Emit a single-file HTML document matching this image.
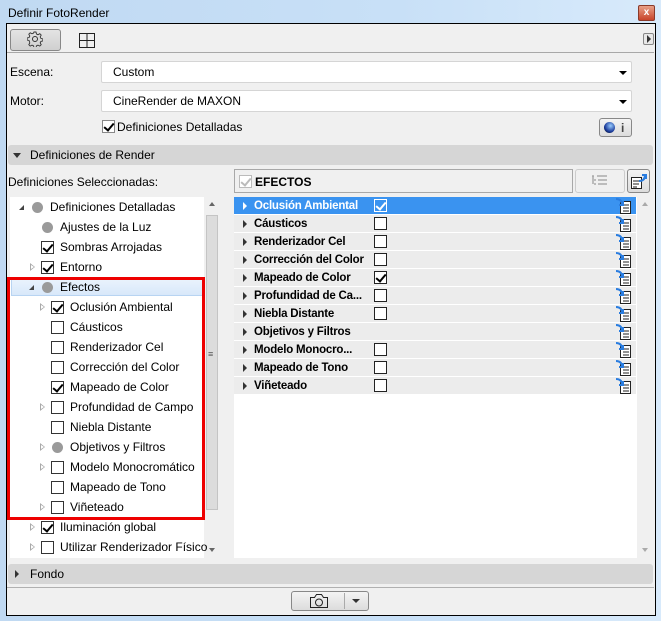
<!DOCTYPE html>
<html><head><meta charset="utf-8"><style>
*{box-sizing:border-box;margin:0;padding:0}
body{width:661px;height:621px;overflow:hidden;background:linear-gradient(90deg,#c0d9f2,#c8e0f7 60%,#d8eafb);font-family:"Liberation Sans",sans-serif;font-size:12px;color:#000;position:relative}
.a{position:absolute}
.t{position:absolute;white-space:nowrap;line-height:14px}
.cb{position:absolute;width:13px;height:13px;border:1px solid #333;background:#fff}
.ck::after{content:"";position:absolute;left:3px;top:0px;width:4px;height:8px;border:solid #000;border-width:0 2px 2px 0;transform:rotate(40deg)}
.lg::after{border-color:#bbb}
.dot{position:absolute;width:11px;height:11px;border-radius:50%;background:#9a9a9a}
.ot{position:absolute;width:0;height:0;border-left:5px solid #aaa;border-top:4px solid transparent;border-bottom:4px solid transparent}
.ot::after{content:"";position:absolute;left:-4px;top:-2px;border-left:3px solid #fff;border-top:2px solid transparent;border-bottom:2px solid transparent}
.dt{position:absolute;width:0;height:0;border-left:5px solid transparent;border-bottom:5px solid #444}
.rt{position:absolute;width:0;height:0;border-left:4px solid #333;border-top:4px solid transparent;border-bottom:4px solid transparent}
.rb{font-weight:bold;font-size:11.5px;letter-spacing:-0.2px}
.combo{position:absolute;background:#fff;border:1px solid #d5d5d5;border-radius:2px}
.combo::after{content:"";position:absolute;right:4px;top:9px;border-top:4px solid #000;border-left:4px solid transparent;border-right:4px solid transparent}
</style></head><body>
<div class="t" style="left:8px;top:6px;font-size:12px">Definir FotoRender</div>
<div class="a" style="left:638px;top:5px;width:17px;height:16px;background:linear-gradient(#e8a088,#c8442a);border:1px solid #8a3a2a;border-radius:2px;color:#fff;font-size:10px;font-weight:bold;text-align:center;line-height:13px">x</div>
<div class="a" style="left:6px;top:23px;width:650px;height:593px;border:1px solid #000;background:#f0f0f0"></div>
<div class="a" style="left:10px;top:29px;width:51px;height:22px;border:1px solid #888;border-radius:3px;background:linear-gradient(#e4e4e4,#d0d0d0)"></div>
<svg class="a" style="left:27px;top:31px" width="16" height="16" viewBox="0 0 16 16"><circle cx="8" cy="8" r="2.5" fill="none" stroke="#333"/><path d="M7 1h2l.5 2 1.5.7 1.8-1 1.4 1.4-1 1.8.7 1.5 2 .5v2l-2 .5-.7 1.5 1 1.8-1.4 1.4-1.8-1-1.5.7-.5 2H7l-.5-2-1.5-.7-1.8 1-1.4-1.4 1-1.8L2.1 9.5.1 9V7l2-.5.7-1.5-1-1.8L3.2 1.8l1.8 1 1.5-.7z" fill="none" stroke="#333" stroke-width=".9"/></svg>
<svg class="a" style="left:79px;top:33px" width="16" height="15"><rect x=".5" y=".5" width="15" height="14" fill="none" stroke="#222"/><path d="M8 1v13M1 7.5h14" stroke="#222"/></svg>
<div class="a" style="left:643px;top:33px;width:11px;height:12px;border:1px solid #888;border-radius:2px;background:#e8e8e8"></div>
<div class="rt" style="left:647px;top:35px"></div>
<div class="a" style="left:7px;top:52px;width:647px;height:1px;background:#a8a8a8"></div>
<div class="t" style="left:10px;top:65px">Escena:</div>
<div class="combo" style="left:101px;top:61px;width:531px;height:22px"></div>
<div class="t" style="left:113px;top:65px">Custom</div>
<div class="t" style="left:10px;top:94px">Motor:</div>
<div class="combo" style="left:101px;top:90px;width:531px;height:22px"></div>
<div class="t" style="left:113px;top:94px">CineRender de MAXON</div>
<div class="cb ck" style="left:102px;top:120px;border-color:#888"></div>
<div class="t" style="left:117px;top:120px">Definiciones Detalladas</div>
<div class="a" style="left:599px;top:118px;width:33px;height:19px;border:1px solid #888;border-radius:3px;background:linear-gradient(#f4f4f4,#dcdcdc)"></div>
<div class="a" style="left:604px;top:122px;width:11px;height:11px;border-radius:50%;background:radial-gradient(circle at 60% 35%,#9cf,#1a3a9a 60%,#000)"></div>
<div class="t" style="left:621px;top:121px;font-weight:bold;color:#444">i</div>
<div class="a" style="left:8px;top:145px;width:645px;height:20px;background:#d6d6d6;border-radius:3px"></div>
<div class="a" style="left:13px;top:153px;border-top:5px solid #333;border-left:4px solid transparent;border-right:4px solid transparent"></div>
<div class="t" style="left:30px;top:148px">Definiciones de Render</div>
<div class="t" style="left:8px;top:175px">Definiciones Seleccionadas:</div>
<div class="a" style="left:234px;top:169px;width:339px;height:24px;border:1px solid #a8a8a8;background:#f0f0f0"></div>
<div class="cb ck lg" style="left:239px;top:175px;border-color:#bbb"></div>
<div class="t" style="left:255px;top:175px;font-weight:bold">EFECTOS</div>
<div class="a" style="left:575px;top:169px;width:50px;height:24px;border:1px solid #ccc;border-radius:3px;background:#f0f0f0"></div>
<svg class="a" style="left:591px;top:175px" width="18" height="12"><path d="M1 1h2M6 1h10M3 5h2M7 5h9M3 9h2M7 9h9M2 1v8" stroke="#aaa" stroke-width="1.5"/></svg>
<div class="a" style="left:627px;top:169px;width:23px;height:24px;border:1px solid #888;border-radius:3px;background:linear-gradient(#f4f4f4,#dcdcdc)"></div>
<svg class="a" style="left:630px;top:172px" width="18" height="18"><rect x="1.5" y="5.5" width="10" height="11" fill="#fff" stroke="#222"/><path d="M3 9h6M3 12h6M3 15h4" stroke="#222"/><path d="M9 9c4 0 6-2 6-6M12 3h4v4" fill="none" stroke="#2a7de0" stroke-width="2"/></svg>
<div class="a" style="left:10px;top:197px;width:194px;height:361px;background:#fff"></div>
<div class="a" style="left:204px;top:197px;width:16px;height:361px;background:#f0f0f0"></div>
<div class="a" style="left:206px;top:215px;width:12px;height:295px;background:#dcdcdc;border:1px solid #c4c4c4"></div>
<div class="t" style="left:208px;top:347px;color:#555;font-size:9px">≡</div>
<div class="a" style="left:209px;top:202px;border-bottom:4px solid #666;border-left:3px solid transparent;border-right:3px solid transparent"></div>
<div class="a" style="left:209px;top:548px;border-top:4px solid #666;border-left:3px solid transparent;border-right:3px solid transparent"></div>
<div class="a" style="left:11px;top:278px;width:192px;height:18px;background:linear-gradient(#eaf3fd,#d8e8fa);border:1px solid #b8d4f2"></div>
<div class="dt" style="left:19px;top:205px"></div><div class="dot" style="left:32px;top:202px"></div><div class="t" style="left:50px;top:200px">Definiciones Detalladas</div>
<div class="dot" style="left:42px;top:222px"></div><div class="t" style="left:60px;top:220px">Ajustes de la Luz</div>
<div class="cb ck" style="left:41px;top:241px"></div><div class="t" style="left:60px;top:240px">Sombras Arrojadas</div>
<div class="ot" style="left:30px;top:263px"></div><div class="cb ck" style="left:41px;top:261px"></div><div class="t" style="left:60px;top:260px">Entorno</div>
<div class="dt" style="left:29px;top:285px"></div><div class="dot" style="left:42px;top:282px"></div><div class="t" style="left:60px;top:280px">Efectos</div>
<div class="ot" style="left:40px;top:303px"></div><div class="cb ck" style="left:51px;top:301px"></div><div class="t" style="left:70px;top:300px">Oclusión Ambiental</div>
<div class="cb" style="left:51px;top:321px"></div><div class="t" style="left:70px;top:320px">Cáusticos</div>
<div class="cb" style="left:51px;top:341px"></div><div class="t" style="left:70px;top:340px">Renderizador Cel</div>
<div class="cb" style="left:51px;top:361px"></div><div class="t" style="left:70px;top:360px">Corrección del Color</div>
<div class="cb ck" style="left:51px;top:381px"></div><div class="t" style="left:70px;top:380px">Mapeado de Color</div>
<div class="ot" style="left:40px;top:403px"></div><div class="cb" style="left:51px;top:401px"></div><div class="t" style="left:70px;top:400px">Profundidad de Campo</div>
<div class="cb" style="left:51px;top:421px"></div><div class="t" style="left:70px;top:420px">Niebla Distante</div>
<div class="ot" style="left:40px;top:443px"></div><div class="dot" style="left:52px;top:442px"></div><div class="t" style="left:70px;top:440px">Objetivos y Filtros</div>
<div class="ot" style="left:40px;top:463px"></div><div class="cb" style="left:51px;top:461px"></div><div class="t" style="left:70px;top:460px">Modelo Monocromático</div>
<div class="cb" style="left:51px;top:481px"></div><div class="t" style="left:70px;top:480px">Mapeado de Tono</div>
<div class="ot" style="left:40px;top:503px"></div><div class="cb" style="left:51px;top:501px"></div><div class="t" style="left:70px;top:500px">Viñeteado</div>
<div class="ot" style="left:30px;top:523px"></div><div class="cb ck" style="left:41px;top:521px"></div><div class="t" style="left:60px;top:520px">Iluminación global</div>
<div class="ot" style="left:30px;top:543px"></div><div class="cb" style="left:41px;top:541px"></div><div class="t" style="left:60px;top:540px">Utilizar Renderizador Físico</div>
<div class="a" style="left:7px;top:277px;width:198px;height:243px;border:3px solid #ee0000"></div>
<div class="a" style="left:234px;top:197px;width:403px;height:361px;background:#fff"></div>
<div class="a" style="left:637px;top:197px;width:16px;height:361px;background:#f0f0f0"></div>
<div class="a" style="left:642px;top:202px;border-bottom:4px solid #aaa;border-left:3px solid transparent;border-right:3px solid transparent"></div>
<div class="a" style="left:642px;top:548px;border-top:4px solid #aaa;border-left:3px solid transparent;border-right:3px solid transparent"></div>
<div id="rl"></div>
<div class="a" style="left:8px;top:564px;width:645px;height:20px;background:#d6d6d6;border-radius:3px"></div>
<div class="rt" style="left:15px;top:570px"></div>
<div class="t" style="left:30px;top:567px">Fondo</div>
<div class="a" style="left:7px;top:587px;width:647px;height:1px;background:#b0b0b0"></div>
<div class="a" style="left:291px;top:591px;width:78px;height:20px;border:1px solid #888;border-radius:3px;background:linear-gradient(#f4f4f4,#dcdcdc)"></div>
<div class="a" style="left:344px;top:593px;width:1px;height:16px;background:#aaa"></div>
<svg class="a" style="left:309px;top:593px" width="20" height="16"><path d="M1.5 4.5h4l2-3h5l2 3h4v10h-17z" fill="none" stroke="#222"/><circle cx="10" cy="9.5" r="3.5" fill="none" stroke="#222"/></svg>
<div class="a" style="left:352px;top:599px;border-top:4px solid #333;border-left:4px solid transparent;border-right:4px solid transparent"></div>
<script>
var rows=[["Oclusión Ambiental",2],["Cáusticos",0],["Renderizador Cel",0],["Corrección del Color",0],["Mapeado de Color",1],["Profundidad de Ca...",0],["Niebla Distante",0],["Objetivos y Filtros",-1],["Modelo Monocro...",0],["Mapeado de Tono",0],["Viñeteado",0]];
var h="";
rows.forEach(function(r,i){var y=197+i*18;var sel=i==0;
h+='<div class="a" style="left:234px;top:'+y+'px;width:402px;height:17px;background:'+(sel?'#3a93f0':'#ececec')+'"></div>';
h+='<div class="rt" style="left:243px;top:'+(y+5)+'px;border-left-color:'+(sel?'#fff':'#333')+'"></div>';
h+='<div class="t rb" style="left:254px;top:'+(y+2)+'px;color:'+(sel?'#fff':'#000')+'">'+r[0]+'</div>';
if(r[1]>=0)h+='<div class="cb'+(r[1]?' ck':'')+(sel?' sw':'')+'" style="left:374px;top:'+(y+2)+'px;border-color:'+(sel?'#fff':'#222')+';background:'+(sel?'#3a93f0':'#fff')+'"></div>';
h+='<svg class="a" style="left:615px;top:'+(y+1)+'px" width="18" height="16"><rect x="5.5" y="3.5" width="10" height="12" fill="#fff" stroke="#222"/><path d="M8 7h6M8 10h6M8 13h6" stroke="#222"/><path d="M1 1c4 0 6 2 6 6M4 7h4V3" fill="none" stroke="#2a7de0" stroke-width="2"/></svg>';
});
document.getElementById("rl").innerHTML=h;
</script>
<style>.sw::after{border-color:#fff !important}</style>
</body></html>
